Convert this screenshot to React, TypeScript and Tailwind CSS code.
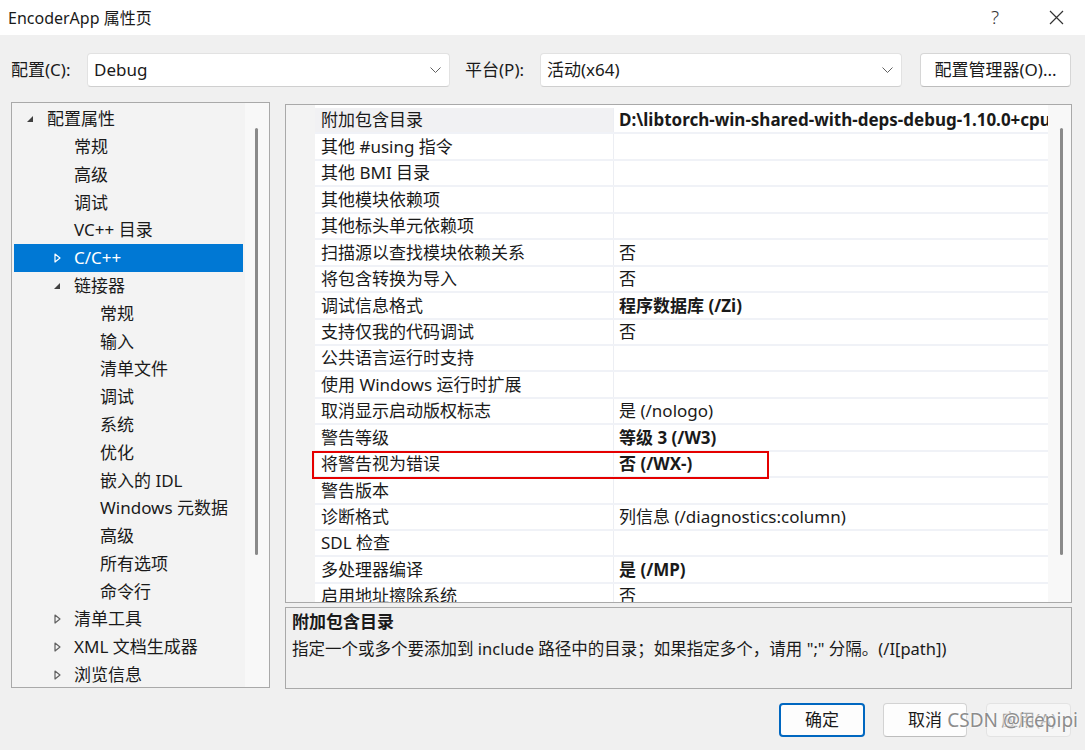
import React from 'react';

type TreeItem = { label: string; level: 0 | 1 | 2; icon?: 'open' | 'closed'; selected?: boolean };

const tree: TreeItem[] = [
  { label: '配置属性', level: 0, icon: 'open' },
  { label: '常规', level: 1 },
  { label: '高级', level: 1 },
  { label: '调试', level: 1 },
  { label: 'VC++ 目录', level: 1 },
  { label: 'C/C++', level: 1, icon: 'closed', selected: true },
  { label: '链接器', level: 1, icon: 'open' },
  { label: '常规', level: 2 },
  { label: '输入', level: 2 },
  { label: '清单文件', level: 2 },
  { label: '调试', level: 2 },
  { label: '系统', level: 2 },
  { label: '优化', level: 2 },
  { label: '嵌入的 IDL', level: 2 },
  { label: 'Windows 元数据', level: 2 },
  { label: '高级', level: 2 },
  { label: '所有选项', level: 2 },
  { label: '命令行', level: 2 },
  { label: '清单工具', level: 1, icon: 'closed' },
  { label: 'XML 文档生成器', level: 1, icon: 'closed' },
  { label: '浏览信息', level: 1, icon: 'closed' },
];

const indent = { 0: 'pl-[13px]', 1: 'pl-[40px]', 2: 'pl-[66px]' };

const props: [string, string, boolean?][] = [
  ['附加包含目录', 'D:\\libtorch-win-shared-with-deps-debug-1.10.0+cpu\\libtorch\\include;D:\\libtorch\\include\\torch\\csrc\\api\\include', true],
  ['其他 #using 指令', ''],
  ['其他 BMI 目录', ''],
  ['其他模块依赖项', ''],
  ['其他标头单元依赖项', ''],
  ['扫描源以查找模块依赖关系', '否'],
  ['将包含转换为导入', '否'],
  ['调试信息格式', '程序数据库 (/Zi)', true],
  ['支持仅我的代码调试', '否'],
  ['公共语言运行时支持', ''],
  ['使用 Windows 运行时扩展', ''],
  ['取消显示启动版权标志', '是 (/nologo)'],
  ['警告等级', '等级 3 (/W3)', true],
  ['将警告视为错误', '否 (/WX-)', true],
  ['警告版本', ''],
  ['诊断格式', '列信息 (/diagnostics:column)'],
  ['SDL 检查', ''],
  ['多处理器编译', '是 (/MP)', true],
  ['启用地址擦除系统', '否'],
];

const Chevron = () => (
  <svg width="11" height="7" viewBox="0 0 11 7" fill="none">
    <polyline points="0.5,0.5 5.5,5.5 10.5,0.5" stroke="#606060" strokeWidth="1" />
  </svg>
);

const Expanded = ({ color = '#404040' }: { color?: string }) => (
  <svg width="6" height="6" viewBox="0 0 6 6">
    <polygon points="6,0 6,6 0,6" fill={color} />
  </svg>
);

const Collapsed = ({ color = '#606060' }: { color?: string }) => (
  <svg width="7" height="10" viewBox="0 0 7 10" fill="none">
    <polygon points="1,1 6,5 1,9" stroke={color} strokeWidth="1.2" strokeLinejoin="round" />
  </svg>
);

const Dropdown = ({ value, width }: { value: string; width: string }) => (
  <div className={`${width} shrink-0 h-[34px] flex items-center justify-between pl-[6px] pr-[8px] bg-white border border-[#e2e2e2] border-b-[#cfcfcf] rounded-[4px]`}>
    <span>{value}</span>
    <Chevron />
  </div>
);

export default function App() {
  return (
    <div className="relative w-[1085px] h-[750px] overflow-hidden bg-[#f0f0f0] text-[#1a1a1a] text-[17px] font-['Noto_Sans','Noto_Sans_CJK_SC',sans-serif]">
      {/* title bar */}
      <div className="h-[35px] bg-white flex items-center pl-[8px] pr-[21px]">
        <span className="text-[16px] flex-1">EncoderApp 属性页</span>
        <span className="text-[19px] font-light text-[#333] mr-[50px]">?</span>
        <svg width="15" height="15" viewBox="0 0 15 15">
          <path d="M1 1L14 14M14 1L1 14" stroke="#333" strokeWidth="1.2" />
        </svg>
      </div>

      {/* configuration row */}
      <div className="mt-[18px] h-[34px] flex items-center pl-[11px]">
        <span className="w-[76px] shrink-0">配置(C):</span>
        <Dropdown value="Debug" width="w-[363px]" />
        <span className="ml-[15px] w-[75px] shrink-0">平台(P):</span>
        <Dropdown value="活动(x64)" width="w-[362px]" />
        <button className="ml-[18px] w-[151px] h-[34px] bg-white border border-[#d6d6d6] border-b-[#bdbdbd] rounded-[4px]">
          配置管理器(O)...
        </button>
      </div>

      {/* main area */}
      <div className="mt-[15px] h-[588px] flex pl-[11px] pr-[13px] gap-[15px]">
        {/* tree */}
        <div className="w-[259px] shrink-0 h-[586px] border border-[#a9a9a9] bg-[#f3f3f3] flex">
          <div className="w-[233px] px-[2px] pt-[2px]">
            {tree.map((t, i) => (
              <div
                key={i}
                className={`h-[27.8px] flex items-center ${indent[t.level]} ${t.selected ? 'bg-[#0078d4] text-white' : ''}`}
              >
                <span className="w-[20px] flex items-center">
                  {t.icon === 'open' && <Expanded />}
                  {t.icon === 'closed' && <Collapsed color={t.selected ? '#ffffff' : '#606060'} />}
                </span>
                <span className="whitespace-nowrap">{t.label}</span>
              </div>
            ))}
          </div>
          <div className="flex-1 bg-[#f8f8f8] pt-[25px] pl-[10px]">
            <div className="w-[3px] h-[427px] rounded-full bg-[#8a8a8a]" />
          </div>
        </div>

        {/* right column */}
        <div className="flex-1 min-w-0 flex flex-col">
          <div className="relative mt-[2px] h-[499px] border border-[#a9a9a9] bg-white flex">
            <div className="w-[29px] shrink-0 bg-[#f3f3f3]" />
            <div className="flex-1 min-w-0 pt-[3px] overflow-hidden">
              {props.map(([name, value, bold], i) => (
                <div key={i} className="h-[26.45px] flex border-b-2 border-[#f0f2f7]">
                  <div className={`w-[299px] shrink-0 pl-[6px] flex items-center whitespace-nowrap border-r border-[#eceef3] ${i === 0 ? 'bg-[#f1f1f3]' : ''}`}>
                    {name}
                  </div>
                  <div className={`flex-1 min-w-0 pl-[5px] flex items-center whitespace-nowrap overflow-hidden ${bold ? 'font-bold' : ''}`}>
                    {value}
                  </div>
                </div>
              ))}
            </div>
            <div className="w-[23px] shrink-0 bg-[#f8f8f8] pt-[23px] pl-[12px]">
              <div className="w-[3px] h-[427px] rounded-full bg-[#8a8a8a]" />
            </div>
            {/* highlight annotation */}
            <div className="absolute left-[26px] top-[346px] w-[457px] h-[28px] border-2 border-[#e50000]" />
          </div>

          <div className="mt-[4px] h-[82px] border border-[#a9a9a9] bg-[#f0f0f0] pl-[6px] leading-[27px]">
            <div className="font-bold">附加包含目录</div>
            <div className="text-[16.5px] whitespace-nowrap">指定一个或多个要添加到 include 路径中的目录；如果指定多个，请用 ";" 分隔。(/I[path])</div>
          </div>
        </div>
      </div>

      {/* buttons */}
      <div className="mt-[13px] h-[34px] flex justify-end pr-[14px]">
        <button className="w-[86px] h-[34px] bg-[#fdfdfd] border-2 border-[#0067c0] rounded-[4px]">确定</button>
        <button className="ml-[18px] w-[84px] h-[34px] bg-[#fdfdfd] border border-[#d3d3d3] border-b-[#bdbdbd] rounded-[4px]">取消</button>
        <button className="ml-[19px] w-[85px] h-[34px] bg-[#f6f6f6] border border-[#e3e3e3] rounded-[4px] text-[#a3a3a3]">应用(A)</button>
      </div>

      {/* watermark */}
      <div className="absolute right-[7px] top-[706px] text-[19px] text-[#8c8c8c] [text-shadow:0_0_2px_#fff,0_0_2px_#fff]">
        CSDN @icepipi
      </div>
    </div>
  );
}
